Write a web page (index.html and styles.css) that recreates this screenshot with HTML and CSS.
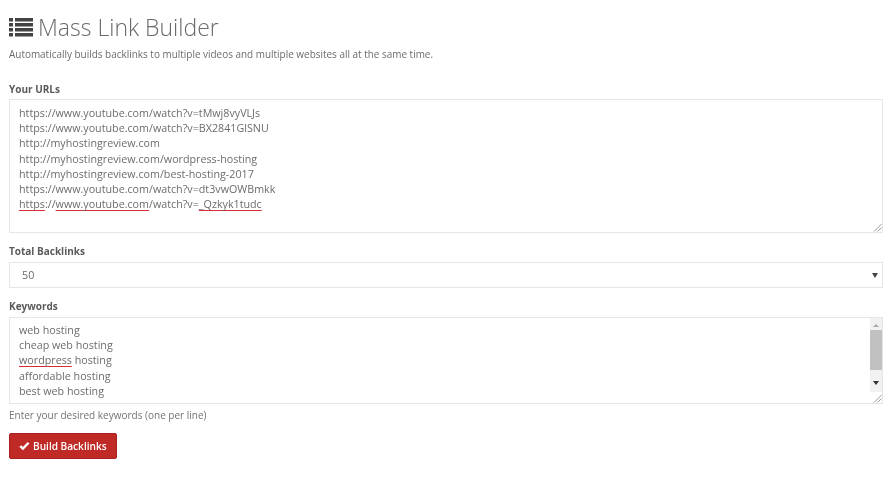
FILE: index.html
```html
<!DOCTYPE html>
<html lang="en">
<head>
<meta charset="utf-8">
<title>Mass Link Builder</title>
<link rel="stylesheet" href="styles.css">
</head>
<body>
<main class="page">
  <h1 class="title">
    <svg class="title-icon" viewBox="0 0 24 20" aria-hidden="true">
      <path d="M0 1h4v3.4H0zM6 1h18v3.4H6zM0 6h4v3.4H0zM6 6h18v3.4H6zM0 11h4v3.4H0zM6 11h18v3.4H6zM0 16h4v3.4H0zM6 16h18v3.4H6z"/>
    </svg>
    <span>Mass Link Builder</span>
  </h1>
  <p class="lead">Automatically builds backlinks to multiple videos and multiple websites all at the same time.</p>

  <form class="form">
    <div class="field field-urls">
      <label class="label">Your URLs</label>
      <div class="box box-urls">
        <div>https://www.youtube.com/watch?v=tMwj8vyVLJs</div>
        <div>https://www.youtube.com/watch?v=BX2841GlSNU</div>
        <div>http://myhostingreview.com</div>
        <div>http://myhostingreview.com/wordpress-hosting</div>
        <div>http://myhostingreview.com/best-hosting-2017</div>
        <div>https://www.youtube.com/watch?v=dt3vwOWBmkk</div>
        <div><span class="typo">https</span>://<span class="typo">www.youtube.com</span>/watch?v=<span class="typo">_Qzkyk1tudc</span></div>
        <svg class="grip" viewBox="0 0 9 9" aria-hidden="true"><path d="M1 8.5 8.5 1M4.5 8.5l4-4"/></svg>
      </div>
    </div>

    <div class="field field-total">
      <label class="label">Total Backlinks</label>
      <div class="box-select">
        <span>50</span>
        <span class="caret"></span>
      </div>
    </div>

    <div class="field field-keywords">
      <label class="label">Keywords</label>
      <div class="box box-keywords">
        <div>web hosting</div>
        <div>cheap web hosting</div>
        <div><span class="typo">wordpress</span> hosting</div>
        <div>affordable hosting</div>
        <div>best web hosting</div>
        <div class="scrollbar">
          <span class="arrow arrow-up"></span>
          <span class="thumb"></span>
          <span class="arrow arrow-down"></span>
        </div>
        <svg class="grip" viewBox="0 0 9 9" aria-hidden="true"><path d="M1 8.5 8.5 1M4.5 8.5l4-4"/></svg>
      </div>
      <p class="help">Enter your desired keywords (one per line)</p>
    </div>

    <button class="btn" type="button">
      <svg class="btn-icon" viewBox="0 0 14 12" aria-hidden="true"><path d="M1.6 6.1 5 9.4l7.2-7.6" /></svg>
      <span>Build Backlinks</span>
    </button>
  </form>
</main>
</body>
</html>
```

FILE: styles.css
```css
* { box-sizing: border-box; }
html, body { margin: 0; background: #fff; }
body {
  font-family: "Open Sans", "Liberation Sans", sans-serif;
  font-size: 11px;
  color: #737373;
}
.page { padding: 13px 9px 0; width: 892px; filter: blur(0.6px); }
.title {
  margin: 0;
  display: flex;
  align-items: center;
  gap: 5px;
  height: 28px;
  font-size: 23px;
  font-weight: 300;
  color: #6a6a6a;
  line-height: 28px;
}
.title-icon { width: 24px; height: 20px; fill: #444; flex: none; }
.lead { margin: 6px 0 0; font-size: 9.95px; line-height: 15px; color: #6c6c6c; }
.form { margin-top: 20px; }
.label {
  display: block;
  font-size: 10px;
  font-weight: 700;
  line-height: 15px;
  color: #5a5a5a;
}
.field-total { margin-top: 11px; }
.field-keywords { margin-top: 11px; }
.box {
  position: relative;
  margin-top: 2px;
  border: 1px solid #e6e6e6;
  font-size: 10.73px;
  line-height: 15.2px;
  color: #6c6c6c;
  padding: 6px 9px 5px;
}
.box-urls { height: 134px; }
.box-keywords { height: 87px; padding-top: 5px; margin-top: 3px; }
.box-select {
  margin-top: 3px;
  height: 26px;
  border: 1px solid #e6e6e6;
  display: flex;
  align-items: center;
  justify-content: space-between;
  padding: 0 4px 0 12px;
  font-size: 10.73px;
  color: #6c6c6c;
}
.caret {
  width: 0; height: 0;
  border-left: 3px solid transparent;
  border-right: 3px solid transparent;
  border-top: 5px solid #444;
}
.typo {
  text-decoration: underline solid #dc2a35 1px;
  text-underline-offset: 2px;
  text-decoration-skip-ink: none;
}
.grip {
  position: absolute;
  right: 0; bottom: 0;
  width: 9px; height: 9px;
  fill: none;
  stroke: #9a9a9a;
  stroke-width: 1;
}
.scrollbar {
  position: absolute;
  top: 0; right: 0; bottom: 11px;
  width: 12px;
  background: #f1f1f1;
  display: flex;
  flex-direction: column;
  align-items: center;
}
.arrow { flex: none; width: 0; height: 0; border-left: 3px solid transparent; border-right: 3px solid transparent; }
.arrow-up { margin: 6px 0 3px; border-bottom: 3px solid #aaa; }
.arrow-down { margin: 11px 0 0; border-top: 4px solid #333; }
.thumb { flex: none; height: 40px; width: 100%; background: #c1c1c1; }
.help { margin: 4px 0 0; font-size: 10px; line-height: 14px; color: #737373; }
.btn {
  margin-top: 11px;
  display: flex;
  align-items: center;
  gap: 3px;
  height: 26px;
  width: 108px;
  padding: 0 0 0 9px;
  border: 1px solid #a82020;
  border-radius: 2px;
  background: #c02a26;
  color: #fff;
  font-family: inherit;
  font-size: 10.1px;
  font-weight: 600;
}
.btn-icon { width: 11px; height: 10px; fill: none; stroke: #fff; stroke-width: 3; flex: none; }
```
